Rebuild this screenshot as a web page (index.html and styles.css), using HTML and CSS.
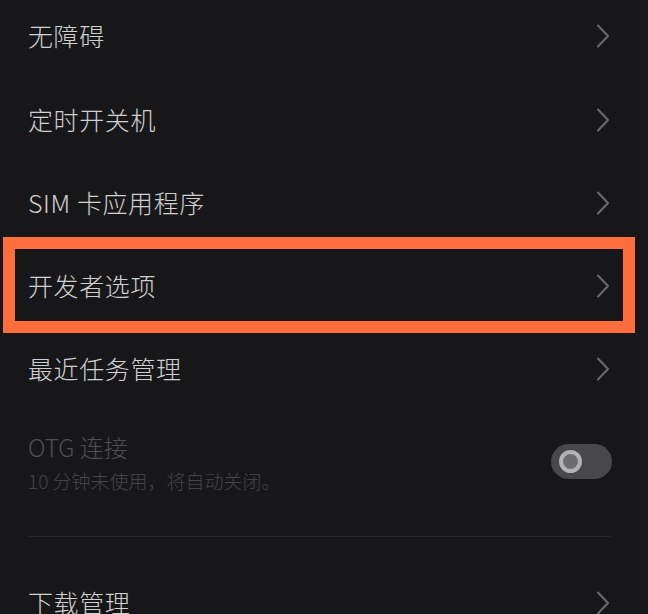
FILE: index.html
```html
<!DOCTYPE html>
<html lang="zh-CN">
<head>
<meta charset="utf-8">
<title>设置</title>
<link rel="stylesheet" href="styles.css">
</head>
<body>
<div class="list">
  <div class="item">
    <span class="label">无障碍</span>
    <svg class="chev" width="14" height="24" viewBox="0 0 14 24"><path d="M2 1.5 L12 12 L2 22.5" /></svg>
  </div>
  <div class="item">
    <span class="label">定时开关机</span>
    <svg class="chev" width="14" height="24" viewBox="0 0 14 24"><path d="M2 1.5 L12 12 L2 22.5" /></svg>
  </div>
  <div class="item">
    <span class="label">SIM 卡应用程序</span>
    <svg class="chev" width="14" height="24" viewBox="0 0 14 24"><path d="M2 1.5 L12 12 L2 22.5" /></svg>
  </div>
  <div class="item item-marked">
    <span class="label">开发者选项</span>
    <svg class="chev" width="14" height="24" viewBox="0 0 14 24"><path d="M2 1.5 L12 12 L2 22.5" /></svg>
    <div class="mark"></div>
  </div>
  <div class="item">
    <span class="label">最近任务管理</span>
    <svg class="chev" width="14" height="24" viewBox="0 0 14 24"><path d="M2 1.5 L12 12 L2 22.5" /></svg>
  </div>
  <div class="item-sub">
    <div class="texts">
      <div class="sub-title">OTG 连接</div>
      <div class="sub-desc">10 分钟未使用，将自动关闭。</div>
    </div>
    <div class="switch"><span class="knob"></span></div>
  </div>
  <div class="divider"></div>
  <div class="item">
    <span class="label">下载管理</span>
    <svg class="chev" width="14" height="24" viewBox="0 0 14 24"><path d="M2 1.5 L12 12 L2 22.5" /></svg>
  </div>
</div>
</body>
</html>
```

FILE: styles.css
```css
html, body {
  margin: 0;
  padding: 0;
  background: #171719;
  overflow: hidden;
}

body {
  width: 648px;
  height: 614px;
  font-family: "Noto Sans CJK SC", "Noto Sans", sans-serif;
  font-weight: 300;
}

.list {
  margin-top: -6.2px;
}

.item {
  position: relative;
  height: 83.25px;
  box-sizing: border-box;
  padding: 0 38px 0 28px;
  display: flex;
  align-items: center;
  justify-content: space-between;
}

.label {
  font-size: 25px;
  letter-spacing: 0.6px;
  color: #d0d0d0;
  line-height: 30px;
}

.chev {
  margin-top: 2px;
}

.chev path {
  fill: none;
  stroke: #6a6a6a;
  stroke-width: 2;
  stroke-linecap: round;
  stroke-linejoin: round;
}

.mark {
  position: absolute;
  left: 3px;
  right: 13px;
  top: -6.4px;
  height: 96px;
  box-sizing: border-box;
  border: 12px solid #fd6e3c;
}

.item-sub {
  display: flex;
  align-items: center;
  justify-content: space-between;
  padding: 22px 36px 42px 28px;
}

.texts {
  display: flex;
  flex-direction: column;
  gap: 6px;
}

.sub-title {
  font-size: 24px;
  line-height: 30px;
  color: #4f4f51;
}

.sub-desc {
  font-size: 19px;
  line-height: 26px;
  color: #444446;
}

.switch {
  width: 61px;
  height: 35px;
  border-radius: 18px;
  background: #48484a;
  display: flex;
  align-items: center;
  padding-left: 8px;
  box-sizing: border-box;
  margin-top: -3px;
}

.knob {
  width: 23px;
  height: 23px;
  border-radius: 50%;
  box-sizing: border-box;
  border: 4px solid #b3b3b3;
  background: #6c6c6e;
}

.divider {
  height: 1px;
  background: #2a2a2c;
  margin: 0 37px 23px 28px;
}
```
